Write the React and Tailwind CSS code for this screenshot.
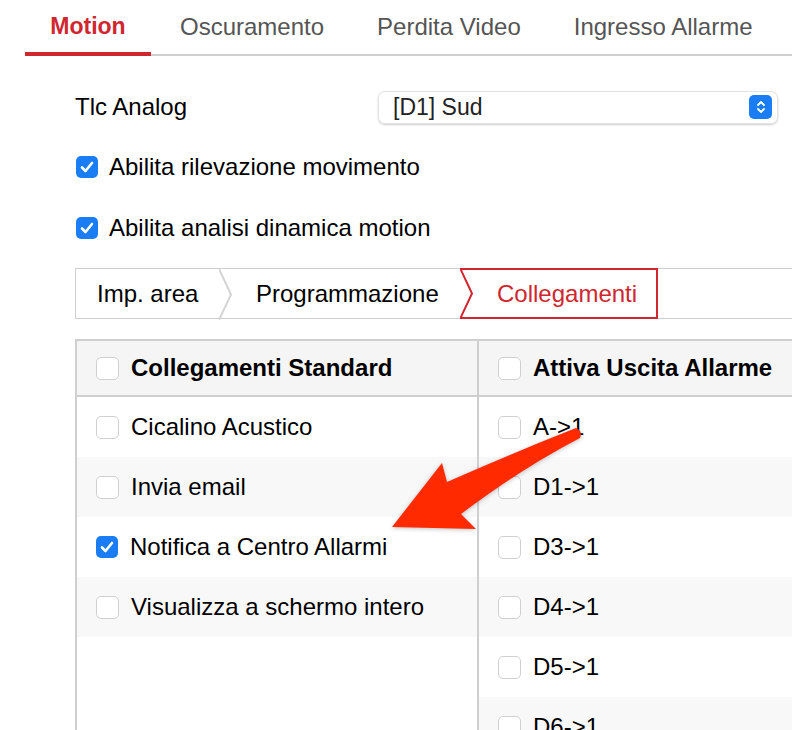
import { useState } from "react"

const font = { fontFamily: '"Liberation Sans", Arial, sans-serif' }

const Check = ({ on, onClick }) =>
  on ? (
    <span onClick={onClick} className="flex h-[22px] w-[22px] shrink-0 items-center justify-center rounded-[5px] bg-[#1a7df5]">
      <svg width="14" height="12" viewBox="0 0 14 12">
        <path d="M2 6.5 L5.5 10 L12 2" fill="none" stroke="white" strokeWidth="2.6" strokeLinecap="round" strokeLinejoin="round" />
      </svg>
    </span>
  ) : (
    <span onClick={onClick} className="h-[23px] w-[23px] shrink-0 rounded-[5px] border border-[#d0d0d0] bg-white" />
  )

const Chevron = ({ red }) => (
  <svg width="13" height="51" viewBox="0 0 13 51" className="shrink-0">
    {red && <path d="M0 1 H13 M0 50 H13" stroke="#d0262f" strokeWidth="2" />}
    <polyline points="0,0 12,25.5 0,51" fill="none" stroke={red ? "#d0262f" : "#d4d4d4"} strokeWidth="2" />
  </svg>
)

const Row = ({ label, on, shade }) => (
  <div className={`flex h-[60px] items-center gap-[12px] pl-[19px] ${shade ? "bg-[#f8f8f8]" : "bg-white"}`}>
    <Check on={on} />
    <span className="text-[24px] leading-none text-black">{label}</span>
  </div>
)

export default function App() {
  const [tab] = useState("Motion")
  const left = [
    ["Cicalino Acustico", false],
    ["Invia email", false],
    ["Notifica a Centro Allarmi", true],
    ["Visualizza a schermo intero", false],
  ]
  const right = ["A->1", "D1->1", "D3->1", "D4->1", "D5->1", "D6->1"]

  return (
    <div style={font} className="relative h-[730px] w-[792px] overflow-hidden bg-white">
      {/* top tabs */}
      <div className="ml-[25px] flex h-[56px] border-b-2 border-[#cfcfcf]">
        {["Motion", "Oscuramento", "Perdita Video", "Ingresso Allarme"].map((t) => (
          <div
            key={t}
            className={`-mb-[2px] flex items-start pt-[15px] leading-none ${
              t === tab ? "w-[126px] justify-center border-b-[4px] border-[#d0262f] text-[23px] font-bold text-[#d0262f]" : "text-[24px] text-[#555]"
            } ${t === "Oscuramento" ? "ml-[29px]" : ""} ${t === "Perdita Video" ? "ml-[53px]" : ""} ${t === "Ingresso Allarme" ? "ml-[53px]" : ""}`}
          >
            {t}
          </div>
        ))}
      </div>

      <div className="ml-[75px]">
        {/* channel select */}
        <div className="mt-[34px] flex h-[34px] items-center">
          <span className="w-[303px] text-[24px] leading-none text-black">Tlc Analog</span>
          <div className="flex h-[33px] w-[400px] items-center justify-between rounded-[7px] border border-[#e2e2e2] pl-[14px] pr-[5px] shadow-[0_1px_2px_rgba(0,0,0,0.2)]">
            <span className="text-[23px] leading-none text-[#222]">[D1] Sud</span>
            <span className="flex h-[24px] w-[23px] items-center justify-center rounded-[5px] bg-[#1a7df5]">
              <svg width="10" height="16" viewBox="0 0 10 16">
                <path d="M2 6 L5 3 L8 6 M2 10 L5 13 L8 10" fill="none" stroke="white" strokeWidth="1.8" strokeLinecap="round" strokeLinejoin="round" />
              </svg>
            </span>
          </div>
        </div>

        {/* checkboxes */}
        <div className="mt-[26px] flex h-[34px] items-center gap-[11px] pl-[1px]">
          <Check on />
          <span className="text-[24px] leading-none text-black">Abilita rilevazione movimento</span>
        </div>
        <div className="mt-[27px] flex h-[34px] items-center gap-[11px] pl-[1px]">
          <Check on />
          <span className="text-[24px] leading-none text-black">Abilita analisi dinamica motion</span>
        </div>

        {/* step tabs */}
        <div className="mt-[23px] flex h-[51px] border border-r-0 border-[#cfcfcf]">
          <div className="flex w-[143px] items-center pl-[21px] text-[24px] leading-none text-black">Imp. area</div>
          <Chevron />
          <div className="flex w-[228px] items-center pl-[24px] text-[24px] leading-none text-black">Programmazione</div>
          <div className="-my-[1px] flex h-[51px]">
            <Chevron red />
            <div className="flex w-[185px] items-center border-y-2 border-r-2 border-[#d0262f] pl-[24px] text-[24px] leading-none text-[#d0262f]">
              Collegamenti
            </div>
          </div>
        </div>

        {/* link table */}
        <div className="mt-[20px] flex w-[760px] border-l-2 border-t-2 border-[#cfcfcf]">
          <div className="w-[402px] border-r-2 border-[#cfcfcf]">
            <div className="flex h-[56px] items-center gap-[12px] border-b-2 border-[#cfcfcf] bg-[#f5f5f5] pl-[19px]">
              <Check />
              <span className="text-[24px] font-bold leading-none text-black">Collegamenti Standard</span>
            </div>
            {left.map(([l, on], i) => (
              <Row key={l} label={l} on={on} shade={i % 2 === 1} />
            ))}
          </div>
          <div className="flex-1">
            <div className="flex h-[56px] items-center gap-[12px] border-b-2 border-[#cfcfcf] bg-[#f5f5f5] pl-[19px]">
              <Check />
              <span className="text-[24px] font-bold leading-none text-black">Attiva Uscita Allarme</span>
            </div>
            {right.map((l, i) => (
              <Row key={l} label={l} on={false} shade={i % 2 === 1} />
            ))}
          </div>
        </div>
      </div>

      {/* annotation arrow */}
      <svg className="pointer-events-none absolute left-0 top-0" width="792" height="730">
        <path
          d="M392 527 L442 463 L447 482 Q515 452 576 428 Q583 431 580 438 Q522 468 461 514 L476 529 Z"
          fill="#ff2a00"
          style={{ filter: "drop-shadow(0 1px 2px rgba(0,0,0,0.25))" }}
        />
      </svg>
    </div>
  )
}
